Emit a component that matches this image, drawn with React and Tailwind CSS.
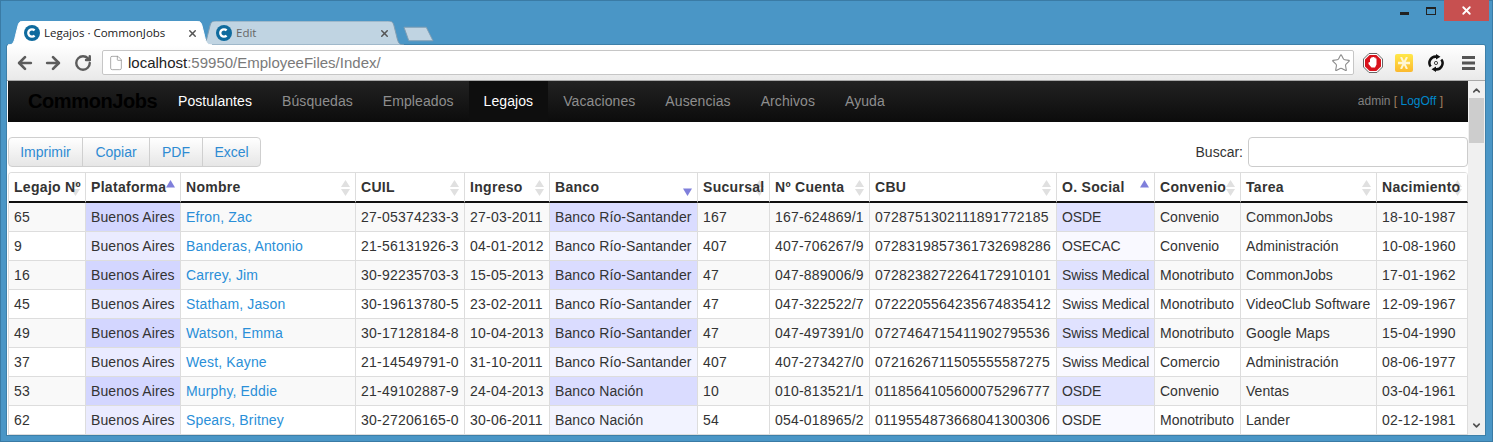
import React from 'react';
import { ArrowLeft, ArrowRight, RotateCw, File, Star, X, ChevronUp, ChevronDown } from 'lucide-react';

const columns = [
  { name: 'Legajo Nº', width: 77, sort: 'none', track: 'tracking-[0.2px]' },
  { name: 'Plataforma', width: 95, sort: 'asc', track: 'tracking-[0.1px]' },
  { name: 'Nombre', width: 175, sort: 'none', track: 'tracking-[0.15px]' },
  { name: 'CUIL', width: 109, sort: 'none', track: 'tracking-[0.22px]' },
  { name: 'Ingreso', width: 85, sort: 'none', track: 'tracking-[0.22px]' },
  { name: 'Banco', width: 148, sort: 'desc', track: 'tracking-[0.1px]' },
  { name: 'Sucursal', width: 72, sort: 'none', track: 'tracking-[0.2px]' },
  { name: 'Nº Cuenta', width: 100, sort: 'none', track: 'tracking-[0.2px]' },
  { name: 'CBU', width: 187, sort: 'none', track: 'tracking-[0.21px]' },
  { name: 'O. Social', width: 98, sort: 'asc', track: 'tracking-[-0.12px]' },
  { name: 'Convenio', width: 86, sort: 'none', track: '' },
  { name: 'Tarea', width: 136, sort: 'none', track: 'tracking-[0.05px]' },
  { name: 'Nacimiento', width: 91, sort: 'none', track: 'tracking-[0.2px]' },
];

const rows = [
  ['65', 'Buenos Aires', 'Efron, Zac', '27-05374233-3', '27-03-2011', 'Banco Río-Santander', '167', '167-624869/1', '0728751302111891772185', 'OSDE', 'Convenio', 'CommonJobs', '18-10-1987'],
  ['9', 'Buenos Aires', 'Banderas, Antonio', '21-56131926-3', '04-01-2012', 'Banco Río-Santander', '407', '407-706267/9', '0728319857361732698286', 'OSECAC', 'Convenio', 'Administración', '10-08-1960'],
  ['16', 'Buenos Aires', 'Carrey, Jim', '30-92235703-3', '15-05-2013', 'Banco Río-Santander', '47', '047-889006/9', '0728238272264172910101', 'Swiss Medical', 'Monotributo', 'CommonJobs', '17-01-1962'],
  ['45', 'Buenos Aires', 'Statham, Jason', '30-19613780-5', '23-02-2011', 'Banco Río-Santander', '47', '047-322522/7', '0722205564235674835412', 'Swiss Medical', 'Monotributo', 'VideoClub Software', '12-09-1967'],
  ['49', 'Buenos Aires', 'Watson, Emma', '30-17128184-8', '10-04-2013', 'Banco Río-Santander', '47', '047-497391/0', '0727464715411902795536', 'Swiss Medical', 'Monotributo', 'Google Maps', '15-04-1990'],
  ['37', 'Buenos Aires', 'West, Kayne', '21-14549791-0', '31-10-2011', 'Banco Río-Santander', '407', '407-273427/0', '0721626711505555587275', 'Swiss Medical', 'Comercio', 'Administración', '08-06-1977'],
  ['53', 'Buenos Aires', 'Murphy, Eddie', '21-49102887-9', '24-04-2013', 'Banco Nación', '10', '010-813521/1', '0118564105600075296777', 'OSDE', 'Convenio', 'Ventas', '03-04-1961'],
  ['62', 'Buenos Aires', 'Spears, Britney', '30-27206165-0', '30-06-2011', 'Banco Nación', '54', '054-018965/2', '0119554873668041300306', 'OSDE', 'Monotributo', 'Lander', '02-12-1981'],
];

const navItems = ['Postulantes', 'Búsquedas', 'Empleados', 'Legajos', 'Vacaciones', 'Ausencias', 'Archivos', 'Ayuda'];

const cellBg = (colIndex, rowIndex) => {
  const odd = rowIndex % 2 === 0;
  if (colIndex === 1) return odd ? 'bg-[#d3d6ff]' : 'bg-[#eaebff]';
  if (colIndex === 5) return odd ? 'bg-[#dadcff]' : 'bg-[#f2f3ff]';
  if (colIndex === 9) return odd ? 'bg-[#e0e2ff]' : 'bg-[#f9f9ff]';
  return odd ? 'bg-[#f9f9f9]' : 'bg-white';
};

const SortArrows = ({ sort }) => {
  if (sort === 'asc') {
    return (
      <svg width="9" height="8" viewBox="0 0 9 8" className="absolute top-[7px] right-[5px]">
        <path d="M4.5 0 L9 7.5 H0 Z" fill="#7f7fdb" />
      </svg>
    );
  }
  if (sort === 'desc') {
    return (
      <svg width="9" height="8" viewBox="0 0 9 8" className="absolute top-[15px] right-[5px]">
        <path d="M0 0.5 H9 L4.5 8 Z" fill="#7f7fdb" />
      </svg>
    );
  }
  return (
    <svg width="9" height="16" viewBox="0 0 9 16" className="absolute top-[7px] right-[5px]">
      <path d="M4.5 0 L9 7 H0 Z" fill="#e0e0e0" />
      <path d="M0 9 H9 L4.5 16 Z" fill="#e0e0e0" />
    </svg>
  );
};

const Favicon = () => (
  <svg width="16" height="16" viewBox="0 0 16 16" className="shrink-0">
    <circle cx="8" cy="8" r="8" fill="#0f6b9e" />
    <path d="M10.6 5.4 A3.7 3.7 0 1 0 10.6 10.6" fill="none" stroke="#fff" strokeWidth="2.3" />
  </svg>
);

const TabShape = ({ fill, stroke }) => (
  <svg className="absolute inset-0 h-full w-full" viewBox="0 0 200 24" preserveAspectRatio="none">
    <path d="M0 24 C6 24 6 20 8 12 L10 4 C11 1 12 0 16 0 H184 C188 0 189 1 190 4 L192 12 C194 20 194 24 200 24 Z" fill={fill} stroke={stroke} strokeWidth="1" vectorEffect="non-scaling-stroke" />
  </svg>
);

const Tab = ({ title, active }) => (
  <div className={`relative flex h-[24px] w-[204px] items-center pr-[14px] pl-[16px] ${active ? 'z-10 text-[#222]' : '-ml-[12px] text-[#666]'}`}>
    <TabShape fill={active ? '#ffffff' : '#c0d4e2'} stroke={active ? '#ffffff' : '#7f9db3'} />
    <div className="relative flex w-full items-center">
      <Favicon />
      <span className="ml-[4px] flex-1 font-['Open_Sans',sans-serif] text-[11.5px] leading-none">{title}</span>
      <X size={11} strokeWidth={3.2} className="text-[#555]" />
    </div>
  </div>
);

const BlockerIcon = () => (
  <svg width="20" height="20" viewBox="0 0 20 20">
    <path d="M6 0.5 H14 L19.5 6 V14 L14 19.5 H6 L0.5 14 V6 Z" fill="#fff" stroke="#666" />
    <path d="M6.6 2 H13.4 L18 6.6 V13.4 L13.4 18 H6.6 L2 13.4 V6.6 Z" fill="#d8121c" />
    <path d="M7 9 V5.5 H8 V4.5 H9.5 V4 H11 V4.5 H12.5 V5.5 H13.5 V11.5 L12 14.5 H8.5 L5.5 11 V9.5 Z" fill="#fff" />
  </svg>
);

const StickyIcon = () => (
  <span className="flex h-[18px] w-[18px] items-center justify-center overflow-hidden rounded-[2px] bg-gradient-to-b from-[#ffe84a] to-[#fbb92e]">
    <svg width="12" height="12" viewBox="0 0 12 12">
      <path d="M0 6 H12" stroke="#fff6d6" strokeWidth="2.6" />
      <path d="M3 0 L9 12 M9 0 L3 12" stroke="#fff6d6" strokeWidth="2" />
    </svg>
  </span>
);

const SyncIcon = () => (
  <svg width="16" height="18" viewBox="0 0 18 20" fill="none">
    <path d="M3 14 A7 7 0 0 1 10 3" stroke="#111" strokeWidth="2.8" />
    <path d="M15 6 A7 7 0 0 1 8 17" stroke="#111" strokeWidth="2.8" />
    <path d="M9 0 L14 3 L9 6 Z M9 14 L4 17 L9 20 Z" fill="#111" />
    <circle cx="9" cy="10" r="1.8" stroke="#333" strokeWidth="1" />
  </svg>
);

const MenuBars = () => (
  <svg width="13" height="14" viewBox="0 0 13 14" className="ml-[18px]">
    <path d="M0 0 H13 V3 H0 Z M0 5.5 H13 V8.5 H0 Z M0 11 H13 V14 H0 Z" fill="#555" />
  </svg>
);

const App = () => (
  <div className="h-[442px] w-[1493px] overflow-hidden bg-[#4a96c6] pl-[7px] font-['Liberation_Sans',Arial,sans-serif] shadow-[inset_0_0_0_1px_#3a7ba5]">
    <div className="flex h-[21px] justify-end pr-[4px]">
      <div className="flex w-[28px] items-end justify-center pb-[6px]">
        <div className="h-[3px] w-[9px] bg-[#222]"></div>
      </div>
      <div className="flex w-[26px] items-start justify-center pt-[7px]">
        <div className="h-[8px] w-[10px] border border-t-2 border-[#222]"></div>
      </div>
      <div className="flex w-[45px] items-center justify-center bg-[#c75050]">
        <X size={13} strokeWidth={3.4} className="text-white" />
      </div>
    </div>
    <div className="flex h-[24px] pl-[1px]">
      <Tab title="Legajos · CommonJobs" active />
      <Tab title="Edit" />
      <svg width="31" height="16" viewBox="0 0 32 16" className="mt-[5px] -ml-[1px]">
        <path d="M1 1 H24 L31 15 H6 Z" fill="#c0d4e2" stroke="#7f9db3" strokeLinejoin="round" />
      </svg>
    </div>
    <div className="h-[390px] w-[1478px] overflow-hidden rounded-t-[2px] bg-white shadow-[0_0_0_1px_#3d7fa8]">
      <div className="flex h-[36px] items-center border-b border-[#a9a9a9] bg-gradient-to-b from-white to-[#e9e9e9] pl-[8px]">
        <ArrowLeft size={20} strokeWidth={3.2} className="text-[#5c5c5c]" />
        <ArrowRight size={20} strokeWidth={3.2} className="ml-[8px] text-[#5c5c5c]" />
        <RotateCw size={18} strokeWidth={3.2} className="ml-[11px] text-[#5c5c5c]" />
        <div className="ml-[10px] flex h-[25px] w-[1252px] items-center rounded-[2px] border border-[#c6c6c6] bg-white pl-[5px]">
          <File size={16} strokeWidth={1.1} className="text-[#8a8a8a]" />
          <span className="ml-[4px] flex-1 text-[15px] leading-none text-[#222]">
            localhost<span className="text-[#7a7a7a]">:59950/EmployeeFiles/Index/</span>
          </span>
          <Star size={20} strokeWidth={1.3} className="mr-[2px] text-[#8a8a8a]" />
        </div>
        <div className="ml-[9px] flex items-center">
          <BlockerIcon />
        </div>
        <div className="ml-[12px]"><StickyIcon /></div>
        <div className="ml-[15px]"><SyncIcon /></div>
        <MenuBars />
      </div>

      <div className="flex h-[354px]">
        <div className="w-[1461px] shrink-0">
          <div className="ml-[1px] flex h-[41px] bg-gradient-to-b from-[#222222] to-[#0c0c0c] text-[14px]">
            <span className="mr-[5px] ml-[20px] w-[130px] text-[20px] leading-[41px] font-bold tracking-[-0.4px] text-black">CommonJobs</span>
            {navItems.map((item, i) => (
              <span
                key={item}
                className={`px-[15px] leading-[41px] tracking-[0.08px] ${i === 3 ? 'bg-[#0e0e0e] text-white' : i === 0 ? 'text-white' : 'text-[#8e8e8e]'}`}
              >
                {item}
              </span>
            ))}
            <span className="mr-[25px] ml-auto text-[12px] leading-[41px] text-[#808080]">
              admin <span className="text-[#a08060]">[</span> <span className="text-[#0088cc]">LogOff</span> <span className="text-[#a08060]">]</span>
            </span>
          </div>

          <div className="flex items-center justify-between pt-[15px] pl-[1px]">
            <div className="flex h-[30px] overflow-hidden rounded-[4px] border border-[#cfcfcf] bg-gradient-to-b from-white to-[#e6e6e6] text-[14px] text-[#2e8bd3]">
              <span className="flex w-[74px] items-center justify-center border-r border-[#cfcfcf]">Imprimir</span>
              <span className="flex w-[67px] items-center justify-center border-r border-[#cfcfcf]">Copiar</span>
              <span className="flex w-[53px] items-center justify-center border-r border-[#cfcfcf]">PDF</span>
              <span className="flex w-[57px] items-center justify-center">Excel</span>
            </div>
            <div className="flex items-center text-[14px] text-[#333]">
              <span>Buscar:</span>
              <div className="ml-[5px] h-[30px] w-[220px] rounded-[4px] border border-[#cccccc] bg-white"></div>
            </div>
          </div>

          <div className="mt-[5px] ml-[1px] w-[1460px] overflow-hidden rounded-t-[4px] border-t border-l border-[#dddddd]">
            <table className="table-fixed border-separate border-spacing-0 text-[14px] leading-[20px] text-[#333]">
              <colgroup>
                {columns.map((col) => (
                  <col key={col.name} style={{ width: col.width }} />
                ))}
              </colgroup>
              <thead>
                <tr>
                  {columns.map((col) => (
                    <th key={col.name} className="relative h-[30px] border-r border-b-2 border-r-[#dddddd] border-b-[#111111] bg-white pb-[1px] pl-[5px] text-left font-bold tracking-[0.3px] whitespace-nowrap">
                      <SortArrows sort={col.sort} />
                      <span className="relative">{col.name}</span>
                    </th>
                  ))}
                </tr>
              </thead>
              <tbody>
                {rows.map((row, r) => (
                  <tr key={row[0]}>
                    {row.map((val, c) => (
                      <td key={c} className={`h-[29px] border-r border-b border-[#dddddd] pl-[5px] whitespace-nowrap ${columns[c].track} ${cellBg(c, r)} ${c === 2 ? 'text-[#2a8fd8]' : ''}`}>
                        {val}
                      </td>
                    ))}
                  </tr>
                ))}
              </tbody>
            </table>
          </div>
        </div>
        <div className="flex w-[17px] shrink-0 flex-col items-center bg-[#f0f0f0]">
          <ChevronUp size={11} strokeWidth={3.5} className="mt-[4px] text-[#505050]" />
          <div className="mt-[2px] h-[45px] w-[15px] bg-[#cdcdcd]"></div>
          <ChevronDown size={11} strokeWidth={3.5} className="mt-auto mb-[4px] text-[#505050]" />
        </div>
      </div>
    </div>
  </div>
);

export default App;
